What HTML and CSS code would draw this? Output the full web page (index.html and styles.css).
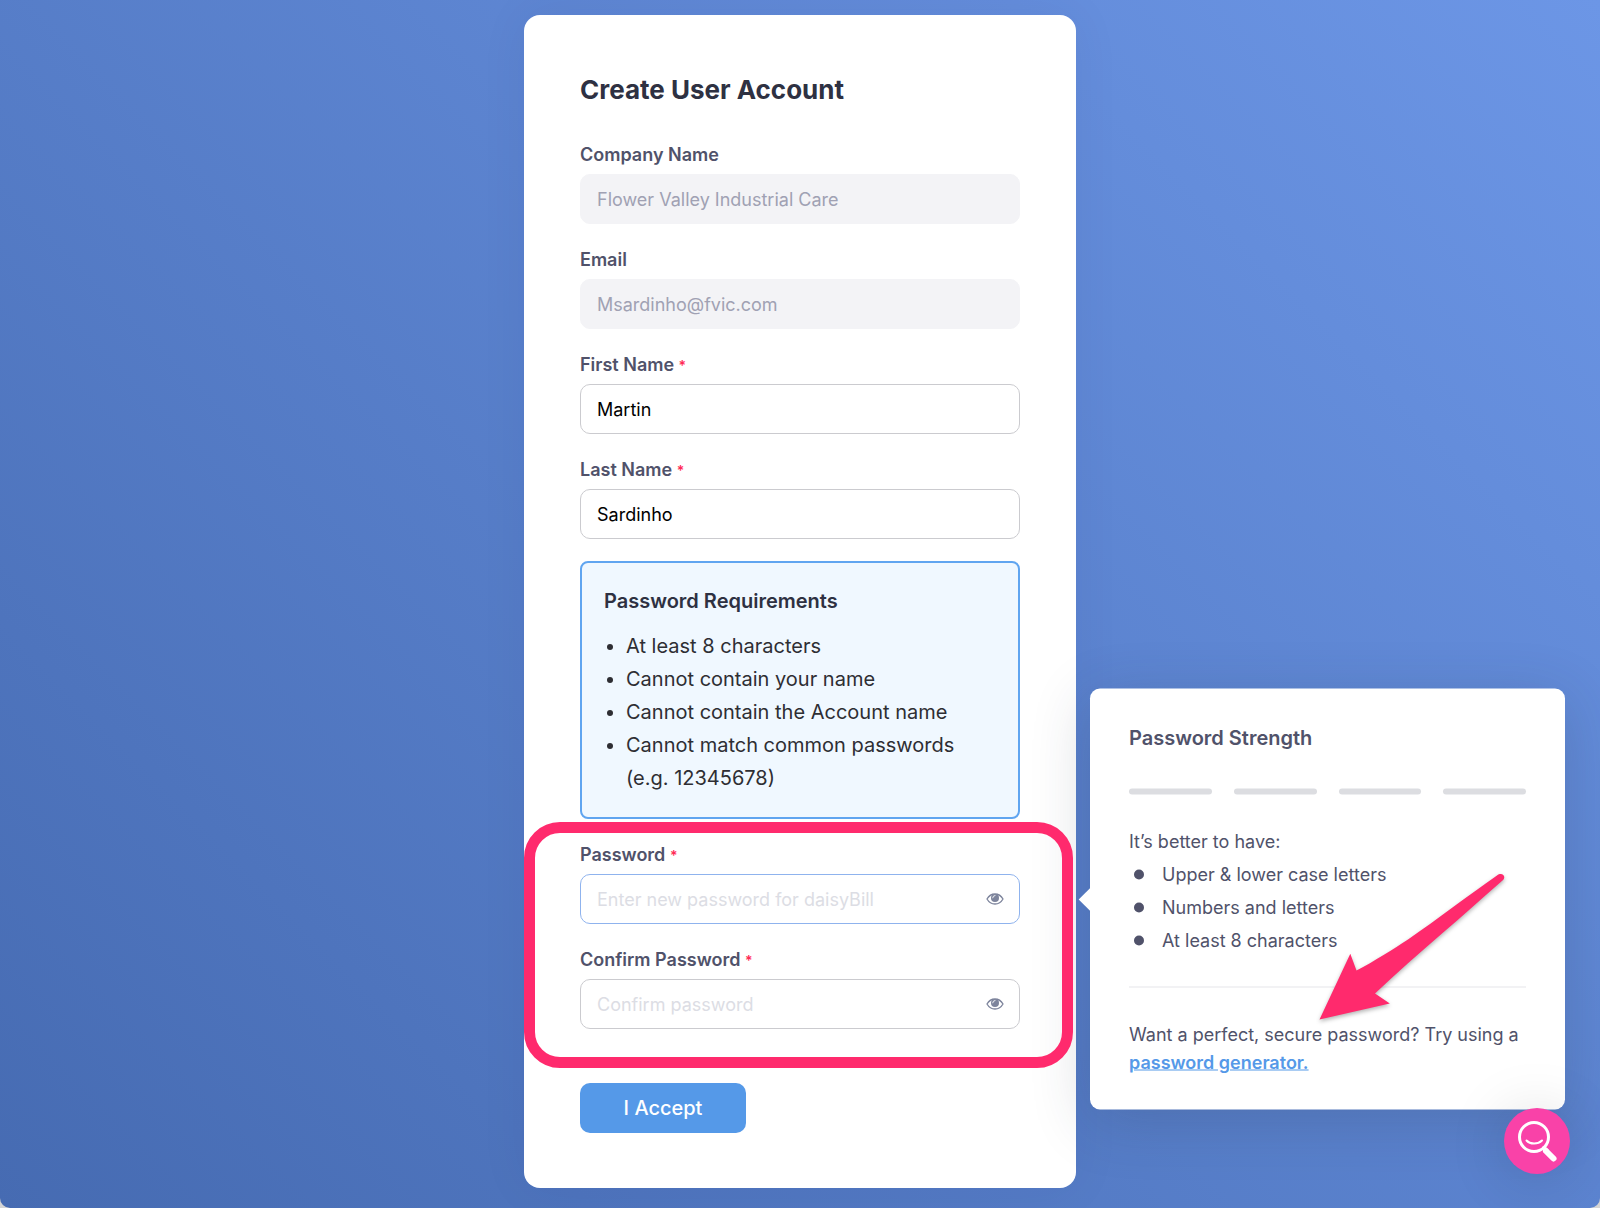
FILE: index.html
```html
<!DOCTYPE html>
<html lang="en">
<head>
    <meta charset="UTF-8">
    <meta name="viewport" content="width=device-width, initial-scale=1.0">
    <title>Create User Account</title>
    <link rel="stylesheet" href="styles.css">
</head>
<body>
    <div class="page">
        <form class="card">
            <h1>Create User Account</h1>
            <div class="field">
                <label for="company">Company Name</label>
                <input type="text" id="company" value="Flower Valley Industrial Care" disabled>
            </div>
            <div class="field">
                <label for="email">Email</label>
                <input type="email" id="email" value="Msardinho@fvic.com" disabled>
            </div>
            <div class="field">
                <label for="firstName">First Name <span class="required">*</span></label>
                <input type="text" id="firstName" value="Martin">
            </div>
            <div class="field">
                <label for="lastName">Last Name <span class="required">*</span></label>
                <input type="text" id="lastName" value="Sardinho">
            </div>

            <div class="requirements">
                <h2>Password Requirements</h2>
                <ul>
                    <li>At least 8 characters</li>
                    <li>Cannot contain your name</li>
                    <li>Cannot contain the Account name</li>
                    <li>Cannot match common passwords (e.g. 12345678)</li>
                </ul>
            </div>

            <div class="passwords">
                <div class="field">
                    <label for="password">Password <span class="required">*</span></label>
                    <div class="password-box">
                        <input type="password" id="password" class="active" placeholder="Enter new password for daisyBill">
                        <button type="button" class="toggle" aria-label="Show password">
                            <svg width="18" height="12" viewBox="0 0 18 12">
                                <path d="M1 6C3 2.500 5.800 1 9 1s6 1.500 8 5c-2 3.500-4.800 5-8 5S3 9.500 1 6z" fill="none" stroke="currentColor" stroke-width="1.300"/>
                                <circle cx="9" cy="5" r="4" fill="currentColor"/>
                                <path d="M6.700 4.800A2.400 2.400 0 0 1 9 2.500" fill="none" stroke="#fff" stroke-width="0.900" stroke-linecap="round"/>
                            </svg>
                        </button>
                        <div class="strength">
                            <h3>Password Strength</h3>
                            <div class="meter">
                                <span></span>
                                <span></span>
                                <span></span>
                                <span></span>
                            </div>
                            <p class="hint">It’s better to have:</p>
                            <ul>
                                <li>Upper &amp; lower case letters</li>
                                <li>Numbers and letters</li>
                                <li>At least 8 characters</li>
                            </ul>
                            <p class="generator">Want a perfect, secure password? Try using a <a href="#">password generator.</a></p>
                            <svg class="pointer" width="200" height="160" viewBox="0 0 200 160">
                                <path d="M9.500 149L40.300 83.300L46.500 100C64 91 84 78 98 69C127 49 158 25 187 5C192 1 197 6 192.500 10C173 27 152 46 132 63C110 82 87 102 65 123L79.800 133z" fill="#ff2a6d"/>
                            </svg>
                        </div>
                    </div>
                </div>
                <div class="field">
                    <label for="confirm">Confirm Password <span class="required">*</span></label>
                    <div class="password-box">
                        <input type="password" id="confirm" placeholder="Confirm password">
                        <button type="button" class="toggle" aria-label="Show password">
                            <svg width="18" height="12" viewBox="0 0 18 12">
                                <path d="M1 6C3 2.500 5.800 1 9 1s6 1.500 8 5c-2 3.500-4.800 5-8 5S3 9.500 1 6z" fill="none" stroke="currentColor" stroke-width="1.300"/>
                                <circle cx="9" cy="5" r="4" fill="currentColor"/>
                                <path d="M6.700 4.800A2.400 2.400 0 0 1 9 2.500" fill="none" stroke="#fff" stroke-width="0.900" stroke-linecap="round"/>
                            </svg>
                        </button>
                    </div>
                </div>
                <div class="highlight"></div>
            </div>

            <button type="submit" class="accept">I Accept</button>
        </form>

        <button type="button" class="help" aria-label="Search help">
            <svg width="66" height="66" viewBox="0 0 66 66" fill="none" stroke="#fff" stroke-linecap="round">
                <circle cx="30" cy="29" r="14.500" stroke-width="3"/>
                <path d="M22.500 32.500C26 36.500 34 36.500 38 32.500" stroke-width="2"/>
                <path d="M40 40l3 3" stroke-width="4"/>
                <path d="M42 43l7.500 7.500" stroke-width="6"/>
            </svg>
        </button>
    </div>
</body>
</html>
```
FILE: styles.css
```css
* {
    box-sizing: border-box;
}
body {
    font-family: Inter, "Liberation Sans", sans-serif;
    font-size: 18px;
    margin: 0;
    color: #50526a;
    background-color: #d5d5d5;
}
h1, h2, h3, p, ul {
    margin: 0;
}
.page {
    min-height: 100vh;
    padding: 15px 0 20px;
    overflow: hidden;
    border-radius: 0 0 10px 10px;
    background: linear-gradient(225deg, #6c96e6, #466bb2);
}
.card {
    max-width: 552px;
    margin: 0 auto;
    padding: 55px 56px;
    border-radius: 16px;
    background-color: white;
    box-shadow: 0 0 50px rgba(20, 40, 90, 0.06);
}
h1 {
    margin-bottom: 32px;
    font-size: 26px;
    line-height: 39px;
    font-weight: bold;
    color: #2e3142;
}
.field {
    margin-bottom: 22px;
}
label {
    display: block;
    margin-bottom: 6px;
    line-height: 27px;
    font-weight: 600;
}
.required {
    font-size: 14px;
    line-height: 1;
    color: #ff2a55;
}
input {
    display: block;
    width: 100%;
    height: 50px;
    padding: 0 16px;
    border: 1px solid #cbcbcf;
    border-radius: 10px;
    font: inherit;
    color: black;
    background-color: transparent;
    outline: none;
}
input:disabled {
    border-color: #f3f3f6;
    color: #a0a1b3;
    background-color: #f3f3f6;
}
input.active {
    border-color: #8fb3ee;
}
input::placeholder {
    color: #dcdde4;
}
.requirements {
    margin-bottom: 22px;
    padding: 22px;
    border: 2px solid #60a5f0;
    border-radius: 8px;
    font-size: 20px;
    line-height: 33px;
    color: #2e2e33;
    background-color: #f0f8ff;
}
.requirements h2 {
    margin-bottom: 12px;
    font-size: 20px;
    font-weight: 600;
    color: #2e3142;
}
.requirements ul {
    padding-left: 22px;
}
.passwords {
    position: relative;
    margin-bottom: 54px;
}
.passwords .field:nth-child(2) {
    margin-bottom: 0;
}
.password-box {
    position: relative;
}
.toggle {
    position: absolute;
    top: 0;
    right: 16px;
    height: 50px;
    padding: 0;
    border: none;
    color: #7d849c;
    background: none;
}
.toggle svg {
    display: block;
}
.strength {
    position: absolute;
    top: 50%;
    left: 100%;
    width: 475px;
    margin-left: 70px;
    padding: 33px 39px;
    transform: translateY(-50%);
    border-radius: 10px;
    background-color: white;
    box-shadow: 0 12px 60px rgba(40, 50, 70, 0.2);
}
/* notch that points at the password input */
.strength::before {
    content: "";
    position: absolute;
    top: 50%;
    left: -8px;
    width: 16px;
    height: 16px;
    margin-top: -8px;
    transform: rotate(45deg);
    background-color: white;
}
.strength h3 {
    font-size: 20px;
    line-height: 33px;
    font-weight: 600;
}
.meter {
    display: flex;
    gap: 22px;
    margin: 34px 0 30px;
}
.meter span {
    flex: 1;
    height: 6px;
    border-radius: 3px;
    background-color: #dcdde1;
}
.hint {
    line-height: 33px;
}
.strength ul {
    padding: 0;
    list-style: none;
}
.strength li {
    display: flex;
    align-items: center;
    gap: 18px;
    padding-left: 5px;
    line-height: 33px;
}
.strength li::before {
    content: "";
    width: 10px;
    height: 10px;
    border-radius: 50%;
    background-color: #50526a;
}
.generator {
    margin-top: 30px;
    padding-top: 33px;
    border-top: 1px solid #e6e6ea;
    line-height: 28px;
}
.generator a {
    font-weight: 600;
    color: #5599e8;
}
.pointer {
    position: absolute;
    top: 182px;
    left: 220px;
    filter: drop-shadow(0 2px 2px rgba(0, 0, 0, 0.3));
}
.highlight {
    position: absolute;
    top: -19px;
    right: -53px;
    bottom: -39px;
    left: -56px;
    border: 11px solid #ff2a6d;
    border-radius: 36px;
    pointer-events: none;
}
.accept {
    display: block;
    width: 166px;
    height: 50px;
    border: none;
    border-radius: 10px;
    font: inherit;
    font-size: 20px;
    font-weight: 500;
    color: white;
    background-color: #5599e8;
}
.help {
    position: fixed;
    right: 30px;
    bottom: 34px;
    width: 66px;
    height: 66px;
    padding: 0;
    border: none;
    border-radius: 50%;
    background-color: #f942a8;
    box-shadow: 0 4px 60px rgba(0, 0, 0, 0.15);
}
.help svg {
    display: block;
}
```
